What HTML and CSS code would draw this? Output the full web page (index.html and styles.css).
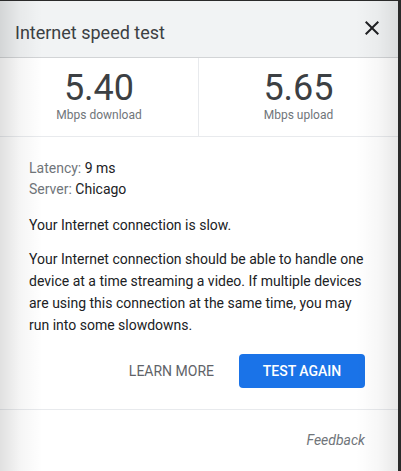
FILE: index.html
```html
<!DOCTYPE html>
<html>
<head>
<meta charset="utf-8">
<link rel="stylesheet" href="styles.css">
</head>
<body>
<div class="panel">
  <div class="header">
    <span class="title">Internet speed test</span>
    <svg class="close" width="24" height="24" viewBox="0 0 24 24"><path d="M19 6.41L17.59 5 12 10.59 6.41 5 5 6.41 10.59 12 5 17.59 6.41 19 12 13.41 17.59 19 19 17.59 13.41 12z" fill="#202124"/></svg>
  </div>
  <div class="stats">
    <div class="stat">
      <div class="num">5.40</div>
      <div class="unit">Mbps download</div>
    </div>
    <div class="stat">
      <div class="num">5.65</div>
      <div class="unit">Mbps upload</div>
    </div>
  </div>
  <div class="body">
    <div class="meta"><span class="lbl">Latency:</span> 9 ms</div>
    <div class="meta"><span class="lbl">Server:</span> Chicago</div>
    <p class="slow">Your Internet connection is slow.</p>
    <p class="desc">Your Internet connection should be able to handle one device at a time streaming a video. If multiple devices are using this connection at the same time, you may run into some slowdowns.</p>
    <div class="actions">
      <span class="learn">LEARN MORE</span>
      <span class="again">TEST AGAIN</span>
    </div>
  </div>
  <div class="footer">
    <span class="feedback">Feedback</span>
  </div>
</div>
</body>
</html>
```
FILE: styles.css
```css
html, body {
  margin: 0;
  padding: 0;
  background: #2a2a2a;
  height: 471px;
  overflow: hidden;
}
body {
  font-family: Roboto, "Liberation Sans", Arial, sans-serif;
  padding-top: 1px;
}
.panel {
  position: relative;
  width: 398px;
  height: 470px;
  background: #fff;
}
.panel::after {
  content: "";
  position: absolute;
  inset: 0;
  pointer-events: none;
  background: linear-gradient(to right, rgba(0,0,0,0.12) 0, rgba(0,0,0,0.04) 20px, rgba(0,0,0,0) 42px, rgba(0,0,0,0) calc(100% - 42px), rgba(0,0,0,0.03) calc(100% - 20px), rgba(0,0,0,0.09) 100%);
}
.header {
  height: 56px;
  background: #f1f3f4;
  border-bottom: 1px solid #d2d4d6;
  display: flex;
  align-items: center;
  justify-content: space-between;
  padding: 0 14px 0 15px;
}
.title {
  font-size: 18px;
  color: #3c4043;
  margin-top: 7px;
}
.close {
  margin-top: -3px;
}
.stats {
  display: grid;
  grid-template-columns: 198px 1fr;
  height: 78px;
  border-bottom: 1px solid #e8eaed;
}
.stat {
  display: flex;
  flex-direction: column;
  align-items: center;
  padding-top: 12px;
}
.stat + .stat {
  border-left: 1px solid #e8eaed;
}
.num {
  font-size: 36px;
  line-height: 36px;
  color: #3c4043;
}
.unit {
  font-size: 12px;
  line-height: 14px;
  color: #70757a;
  margin-top: 2px;
}
.body {
  padding: 21px 33px 0 29px;
  font-size: 14px;
  color: #202124;
}
.meta {
  line-height: 21px;
}
.lbl {
  color: #70757a;
}
.slow {
  margin: 14px 0 0;
  line-height: 22px;
}
.desc {
  margin: 12px 0 0;
  line-height: 22px;
}
.actions {
  display: flex;
  justify-content: flex-end;
  align-items: center;
  gap: 25px;
  margin-top: 18px;
  padding-bottom: 21px;
  border-bottom: 1px solid #e8eaed;
  margin-left: -29px;
  margin-right: -33px;
  padding-right: 33px;
}
.learn {
  font-size: 14px;
  color: #5f6368;
}
.again {
  background: #1a73e8;
  color: #fff;
  font-size: 14px;
  font-weight: 500;
  border-radius: 4px;
  width: 126px;
  height: 34px;
  display: flex;
  align-items: center;
  justify-content: center;
}
.footer {
  display: flex;
  justify-content: flex-end;
  padding: 22px 33px 0 0;
}
.feedback {
  font-style: italic;
  font-size: 14px;
  color: #70757a;
}
```
